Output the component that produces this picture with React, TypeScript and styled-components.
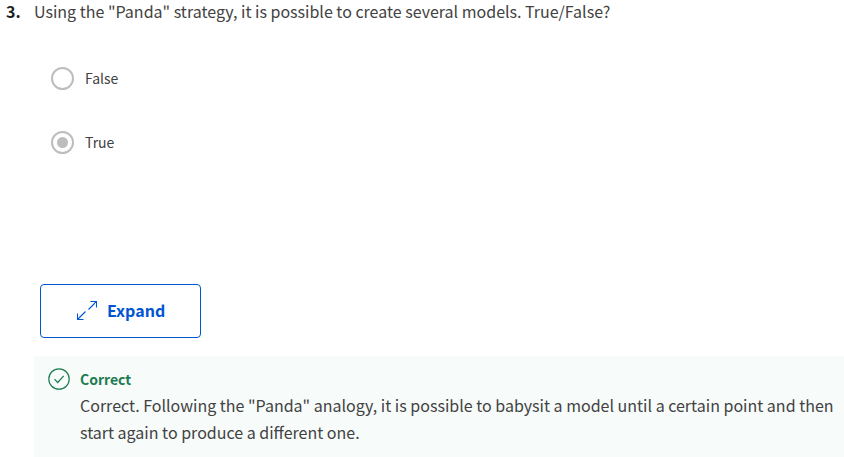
import React from "react";
import styled, { createGlobalStyle } from "styled-components";

const GlobalStyle = createGlobalStyle`
  *, *::before, *::after { box-sizing: border-box; }
  body {
    margin: 0;
    background: #fff;
    color: #424242;
    font-family: "Noto Sans CJK SC", "Open Sans", sans-serif;
    font-size: 16px;
    line-height: 27px;
    font-weight: 400;
  }
`;

const Question = styled.form`
  display: grid;
  grid-template-columns: 28px minmax(0, 1fr);
  padding-left: 6px;
`;

const QuestionNumber = styled.span`
  line-height: 22px;
  font-weight: 700;
  color: #1f1f1f;
`;

const Prompt = styled.h2`
  margin: 0;
  font-size: 16px;
  line-height: 22px;
  font-weight: inherit;
`;

const Body = styled.div`
  grid-column: 2;
`;

const Options = styled.div`
  display: flex;
  flex-direction: column;
  gap: 40px;
  padding: 44px 0 0 17px;
`;

const Option = styled.label`
  display: flex;
  align-items: flex-end;
  gap: 11px;
  height: 24px;
  font-size: 14px;
  line-height: 24px;
`;

const Radio = styled.input`
  appearance: none;
  display: grid;
  place-items: center;
  width: 23px;
  height: 23px;
  margin: 0;
  border: 2px solid #bdbdbd;
  border-radius: 50%;
  background: #fff;

  &:checked::before {
    content: "";
    width: 11px;
    height: 11px;
    border-radius: 50%;
    background: #bdbdbd;
  }
`;

const ExpandButton = styled.button`
  display: flex;
  align-items: center;
  justify-content: center;
  gap: 10px;
  height: 54px;
  margin: 130px 0 18px 6px;
  padding: 0 35px 2px 36px;
  border: 1px solid #0056d2;
  border-radius: 4px;
  background: #fff;
  color: #0056d2;
  font: inherit;
  line-height: 24px;
  font-weight: 700;
`;

const Feedback = styled.section`
  display: grid;
  grid-template-columns: 22px minmax(0, 1fr);
  column-gap: 10px;
  padding: 10px 0 11px 14px;
  background: #f7fbfa;
`;

const FeedbackTitle = styled.h3`
  margin: 0;
  font-size: 14px;
  line-height: 26px;
  font-weight: 700;
  color: #1d7c50;
`;

const FeedbackText = styled.p`
  grid-column: 2;
  margin: 0;
`;

const CheckIcon = styled.svg`
  align-self: end;
`;

export default function App() {
  return (
    <>
      <GlobalStyle />
      <Question>
        <QuestionNumber>3.</QuestionNumber>
        <Prompt id="prompt">
          Using the "Panda" strategy, it is possible to create several models. True/False?
        </Prompt>
        <Body>
          <Options role="radiogroup" aria-labelledby="prompt">
            <Option>
              <Radio type="radio" name="answer" value="false" />
              False
            </Option>
            <Option>
              <Radio type="radio" name="answer" value="true" defaultChecked />
              True
            </Option>
          </Options>
          <ExpandButton type="button">
            <svg width="20" height="22" viewBox="0 0 20 22" fill="none" stroke="currentColor" strokeWidth="1.1" aria-hidden="true">
              <path d="M13.5 2.5h6v6M19.5 2.5l-8 8M6.5 20.5h-6v-6M0.5 20.5l8-8" />
            </svg>
            Expand
          </ExpandButton>
          <Feedback>
            <CheckIcon width="22" height="24" viewBox="0 0 22 24" fill="none" stroke="#1d7c50" strokeWidth="1.2" aria-hidden="true">
              <circle cx="11" cy="11" r="10.2" />
              <path d="M6.5 11.2l3.2 3.3 6-6.6" />
            </CheckIcon>
            <FeedbackTitle>Correct</FeedbackTitle>
            <FeedbackText>
              Correct. Following the "Panda" analogy, it is possible to babysit a model until a certain point and then
              start again to produce a different one.
            </FeedbackText>
          </Feedback>
        </Body>
      </Question>
    </>
  );
}
